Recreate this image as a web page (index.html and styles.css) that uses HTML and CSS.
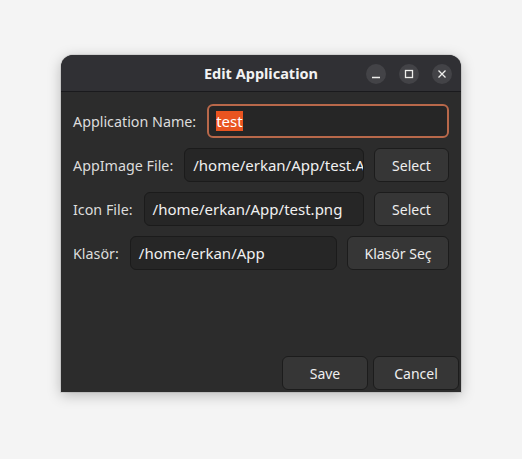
FILE: index.html
```html
<!DOCTYPE html>
<html>
<head>
<meta charset="utf-8">
<link rel="stylesheet" href="styles.css">
</head>
<body>
<div class="window">
  <div class="titlebar">
    <div class="title">Edit Application</div>
    <div class="controls">
      <span class="wbtn"><svg width="20" height="20" viewBox="0 0 20 20"><path d="M6 13.5h8" stroke="#eeeeec" stroke-width="1.3" fill="none"/></svg></span>
      <span class="wbtn"><svg width="20" height="20" viewBox="0 0 20 20"><rect x="6.5" y="6.5" width="7" height="7" stroke="#eeeeec" stroke-width="1.3" fill="none"/></svg></span>
      <span class="wbtn"><svg width="20" height="20" viewBox="0 0 20 20"><path d="M6.5 6.5l7 7M13.5 6.5l-7 7" stroke="#eeeeec" stroke-width="1.3" fill="none"/></svg></span>
    </div>
  </div>
  <div class="content">
    <div class="row">
      <span class="label">Application Name:</span>
      <div class="entry focused"><span class="sel">test</span></div>
    </div>
    <div class="row">
      <span class="label">AppImage File:</span>
      <div class="entry">/home/erkan/App/test.A</div>
      <div class="btn">Select</div>
    </div>
    <div class="row">
      <span class="label">Icon File:</span>
      <div class="entry">/home/erkan/App/test.png</div>
      <div class="btn">Select</div>
    </div>
    <div class="row">
      <span class="label">Klasör:</span>
      <div class="entry">/home/erkan/App</div>
      <div class="btn wide">Klasör Seç</div>
    </div>
  </div>
  <div class="actions">
    <div class="btn action">Save</div>
    <div class="btn action">Cancel</div>
  </div>
</div>
</body>
</html>
```

FILE: styles.css
```css
html, body {
  margin: 0;
  padding: 0;
}
body {
  background: #f4f4f4;
  width: 522px;
  height: 459px;
  padding: 55px 0 0 61px;
  box-sizing: border-box;
  font-family: "Noto Sans", "Open Sans", sans-serif;
  font-size: 14px;
}
.window {
  width: 400px;
  height: 337px;
  background: #2c2c2c;
  border-radius: 12px 12px 0 0;
  box-shadow: 0 3px 14px rgba(0,0,0,0.25), 0 0 0 1px rgba(0,0,0,0.08);
  display: flex;
  flex-direction: column;
  overflow: hidden;
}
.titlebar {
  height: 36px;
  background: #303034;
  border-bottom: 1px solid #1a1a1d;
  display: flex;
  align-items: center;
  justify-content: center;
  position: relative;
  flex: none;
}
.title {
  color: #f2f2f2;
  font-weight: bold;
  font-size: 14.5px;
}
.controls {
  position: absolute;
  right: 9px;
  top: 9px;
  display: flex;
  gap: 13px;
}
.wbtn {
  width: 20px;
  height: 20px;
  border-radius: 50%;
  background: #434347;
  display: block;
}
.wbtn svg { display: block; }
.content {
  padding: 12px 12px 0 12px;
  display: flex;
  flex-direction: column;
  gap: 10px;
  flex: 1;
}
.row {
  display: flex;
  align-items: center;
  height: 34px;
}
.label {
  color: #dcdcdc;
  margin-right: 11px;
  flex: none;
  font-size: 14.3px;
}
.entry {
  flex: 1;
  height: 34px;
  box-sizing: border-box;
  background: #262626;
  border: 1px solid #1b1b1b;
  border-radius: 6px;
  color: #f0f0f0;
  padding: 0 8px;
  display: flex;
  align-items: center;
  white-space: nowrap;
  overflow: hidden;
  font-size: 15px;
}
.entry.focused {
  border: 2px solid #b8684a;
  padding-left: 7px;
}
.sel {
  background: #e95420;
  color: #ffffff;
}
.btn {
  height: 34px;
  box-sizing: border-box;
  background: #363636;
  border: 1px solid #1c1c1c;
  border-radius: 6px;
  color: #eeeeee;
  display: flex;
  align-items: center;
  justify-content: center;
  margin-left: 10px;
  width: 75px;
  flex: none;
}
.btn.wide { width: 102px; }
.actions {
  display: flex;
  justify-content: flex-end;
  gap: 5px;
  padding: 0 2px 2px 0;
}
.btn.action {
  margin-left: 0;
  width: 86px;
}
```
